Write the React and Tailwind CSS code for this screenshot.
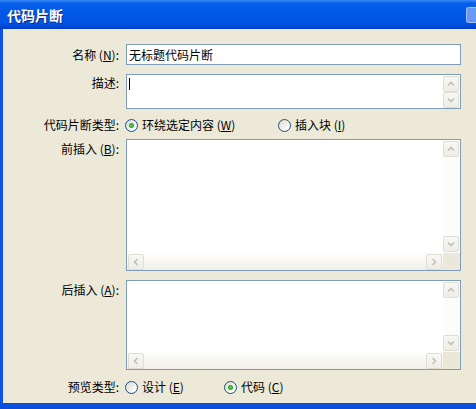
import React from "react";

// XP-style "代码片断" dialog

function Chevron({ dir }) {
  const pts = {
    up: "1,5.5 4,2.5 7,5.5",
    down: "1,2.5 4,5.5 7,2.5",
    left: "5.5,1 2.5,4 5.5,7",
    right: "2.5,1 5.5,4 2.5,7",
  }[dir];
  return (
    <svg width="8" height="8" viewBox="0 0 8 8">
      <polyline points={pts} fill="none" stroke="#c3c0b1" strokeWidth="1.6" />
    </svg>
  );
}

function ScrollBtn({ dir }) {
  return (
    <div className="flex h-[16px] w-[16px] shrink-0 items-center justify-center rounded-[2px] border border-[#e0ded3] bg-[linear-gradient(to_bottom,#f8f8f4,#eeede5)]">
      <Chevron dir={dir} />
    </div>
  );
}

function Radio({ checked }) {
  return (
    <span className="flex h-[13px] w-[13px] shrink-0 items-center justify-center rounded-full border border-[#1c5180] bg-[linear-gradient(135deg,#dcd9cd_0%,#ffffff_85%)]">
      {checked && <span className="h-[5px] w-[5px] rounded-full bg-[radial-gradient(circle,#5fd35f_0%,#21a121_70%)]" />}
    </span>
  );
}

function Option({ checked, label, hot, className = "" }) {
  return (
    <div className={`flex items-center gap-[4px] ${className}`}>
      <Radio checked={checked} />
      <span>
        {label} (<u>{hot}</u>)
      </span>
    </div>
  );
}

function ScrollBox({ className }) {
  return (
    <div className={`flex w-[335px] flex-col border border-[#7f9db9] bg-white ${className}`}>
      <div className="flex min-h-0 flex-1">
        <div className="flex-1" />
        <div className="flex w-[17px] flex-col justify-between bg-[#fcfcf9] py-[1px]">
          <ScrollBtn dir="up" />
          <ScrollBtn dir="down" />
        </div>
      </div>
      <div className="flex h-[17px]">
        <div className="flex flex-1 items-center justify-between bg-[linear-gradient(to_bottom,#fefefb,#f0efe7)] px-[1px]">
          <ScrollBtn dir="left" />
          <ScrollBtn dir="right" />
        </div>
        <div className="w-[17px] bg-[#ebe8da]" />
      </div>
    </div>
  );
}

export default function App() {
  return (
    <div className="flex h-[409px] w-[476px] flex-col overflow-hidden bg-[#ece9d8] font-['Noto_Sans_CJK_SC',sans-serif] text-[12px] leading-none text-black">
      {/* title bar */}
      <div className="flex h-[29px] shrink-0 items-center justify-between bg-[linear-gradient(to_bottom,#3a8cf8_0%,#0a60ea_10%,#0058e7_45%,#0054e3_80%,#0047d5_92%,#003bc0_100%)] pl-[7px]">
        <span className="text-[14px] font-bold text-white [text-shadow:1px_1px_0_#0a2a8a]">代码片断</span>
        <div className="h-[16px] w-[10px] rounded-l-[3px] border border-r-0 border-[#9fbff7] bg-[#6b98f2]" />
      </div>

      <div className="flex flex-1 border-l-[3px] border-[#0b55e4]">
        <div className="flex flex-1 flex-col pt-[15px]">
          {/* name */}
          <div className="flex h-[21px] items-center gap-[7px]">
            <div className="w-[116px] text-right">
              名称 (<u>N</u>):
            </div>
            <div className="flex h-[21px] w-[335px] items-center border border-[#7f9db9] bg-white pl-[2px]">
              无标题代码片断
            </div>
          </div>

          {/* description */}
          <div className="mt-[9px] flex items-start gap-[7px]">
            <div className="w-[116px] pt-[3px] text-right">描述:</div>
            <div className="flex h-[35px] w-[335px] border border-[#7f9db9] bg-white">
              <div className="flex-1 pl-[2px] pt-[3px]">
                <div className="h-[12px] w-[1px] bg-black" />
              </div>
              <div className="flex w-[17px] flex-col bg-[#fcfcf9] pt-[1px]">
                <ScrollBtn dir="up" />
                <ScrollBtn dir="down" />
              </div>
            </div>
          </div>

          {/* snippet type */}
          <div className="mt-[6px] flex h-[20px] items-center gap-[6px]">
            <div className="w-[116px] text-right">代码片断类型:</div>
            <Option checked label="环绕选定内容" hot="W" className="w-[147px]" />
            <Option label="插入块" hot="I" />
          </div>

          {/* before */}
          <div className="mt-[4px] flex items-start gap-[7px]">
            <div className="w-[116px] pt-[4px] text-right">
              前插入 (<u>B</u>):
            </div>
            <ScrollBox className="h-[132px]" />
          </div>

          {/* after */}
          <div className="mt-[9px] flex items-start gap-[7px]">
            <div className="w-[116px] pt-[4px] text-right">
              后插入 (<u>A</u>):
            </div>
            <ScrollBox className="h-[90px]" />
          </div>

          {/* preview type */}
          <div className="mt-[7px] flex h-[20px] items-center gap-[6px]">
            <div className="w-[116px] text-right">预览类型:</div>
            <Option label="设计" hot="E" className="w-[93px]" />
            <Option checked label="代码" hot="C" />
          </div>
        </div>
      </div>

      <div className="h-[6px] shrink-0 bg-[#0a50dc]" />
    </div>
  );
}
